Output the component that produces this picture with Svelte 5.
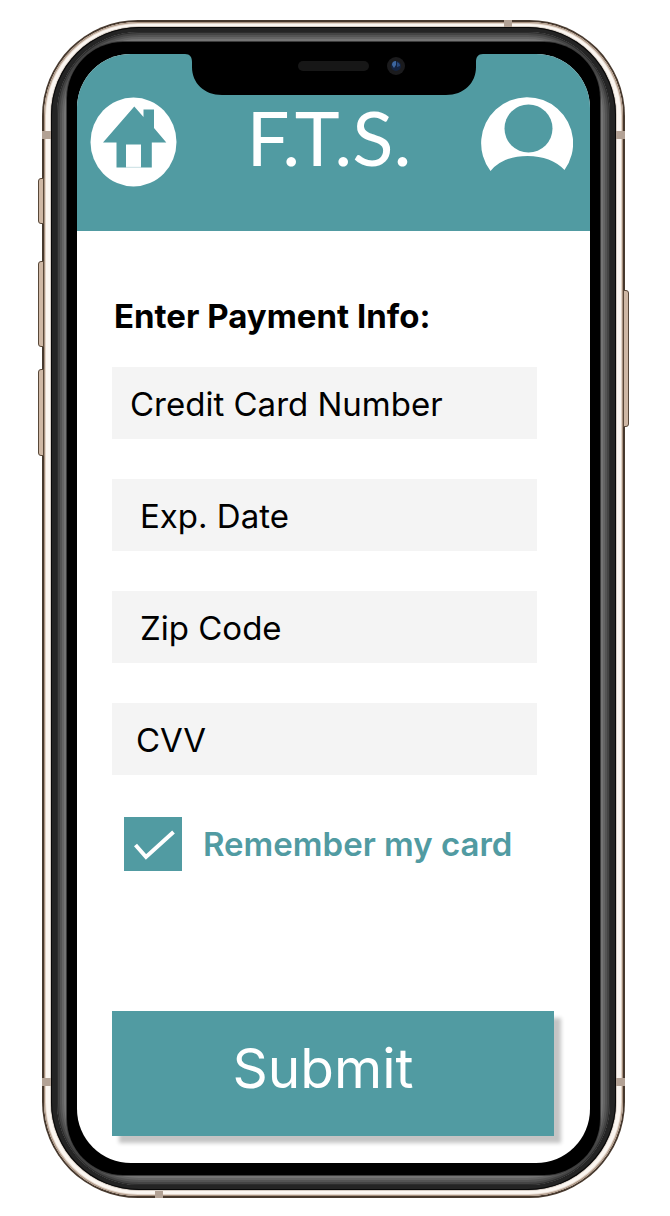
<script>
  const fields = [
    { id: 'card-number', text: 'Credit Card Number', indent: 'narrow', mode: 'numeric' },
    { id: 'exp-date', text: 'Exp. Date', indent: 'wide', mode: 'text' },
    { id: 'zip-code', text: 'Zip Code', indent: 'wide', mode: 'numeric' },
    { id: 'cvv', text: 'CVV', indent: 'middle', mode: 'numeric' }
  ];
  let values = $state(['', '', '', '']);
  let remember = $state(true);
</script>

<div class="page">
  <div class="phone">
    <span class="key key-mute"></span>
    <span class="key key-up"></span>
    <span class="key key-down"></span>
    <span class="key key-power"></span>
    <div class="steel">
      <span class="band side left upper"></span>
      <span class="band side left lower"></span>
      <span class="band side right upper"></span>
      <span class="band side right lower"></span>
      <span class="band flat top"></span>
      <span class="band flat bottom"></span>
      <div class="seal">
        <div class="rim">
          <div class="bezel">
            <main class="screen">
              <svg class="notch" viewBox="0 0 298 42" aria-hidden="true">
                <path d="M0 0H298C293 0 291 3 291 8V13C291 29 279 41 261 41H37C19 41 7 29 7 13V8C7 3 5 0 0 0Z" fill="#000" />
                <rect x="113" y="7" width="71" height="10" rx="5" fill="#171717" />
                <circle cx="211" cy="12" r="9" fill="#1b1b1d" />
                <circle cx="211" cy="12" r="5" fill="#14233f" />
                <path d="M207 11a4 4 0 0 1 4-4v4l-2 3z" fill="#3d669f" />
                <path d="M212 8q3 1 3 4l-3 1z" fill="#29497d" />
              </svg>

              <header>
                <a class="home" href="#home" aria-label="Home">
                  <svg width="87" height="90" viewBox="0 0 87 90">
                    <ellipse cx="43.5" cy="45" rx="43" ry="44.5" fill="#fff" />
                    <path d="M44.3 9.5L53.5 20V12.5H64V31L76.3 45.5H61.8V70.5H51V47.5H36V70.5H26.5V45.5H13Z" fill="#519ba2" />
                    <path d="M36 70.3H51" stroke="#c9dfe3" />
                  </svg>
                </a>
                <span class="brand">F.T.S.</span>
                <a class="profile" href="#profile" aria-label="Profile">
                  <svg width="92" height="76" viewBox="0 0 92 76">
                    <path d="M9.500 74A46 46 0 1 1 83.500 73Q70 59 46.500 59Q22 59 9.500 74Z" fill="#fff" />
                    <circle cx="47.500" cy="31.500" r="24" fill="#519ba2" />
                  </svg>
                </a>
              </header>

              <form onsubmit={(event) => event.preventDefault()}>
                <h1>Enter Payment Info:</h1>
                <div class="fields">
                  {#each fields as field, i}
                    <input
                      id={field.id}
                      class={field.indent}
                      type="text"
                      inputmode={field.mode}
                      aria-label={field.text}
                      placeholder={field.text}
                      bind:value={values[i]}
                    />
                  {/each}
                </div>
                <label class="remember" for="remember">
                  <span class="tick">
                    <input id="remember" type="checkbox" bind:checked={remember} />
                    {#if remember}
                      <svg viewBox="0 0 57 54" aria-hidden="true">
                        <path d="M11 28L21.500 40L49 15" fill="none" stroke="#fff" stroke-width="4" />
                      </svg>
                    {/if}
                  </span>
                  <span>Remember my card</span>
                </label>
                <button type="submit">Submit</button>
              </form>
            </main>
          </div>
        </div>
      </div>
    </div>
  </div>
</div>

<style>
  :global(body) {
    margin: 0;
    background: #fff;
  }

  .page {
    padding: 20px 45px 18px 42px;
    font-family: Inter, "Liberation Sans", sans-serif;
    color: #000;
  }

  .page * {
    box-sizing: border-box;
  }

  .phone {
    position: relative;
    max-width: 720px;
    margin: 0 auto;
    padding: 2px;
    border-radius: 96px;
    background: #47392e;
  }

  .steel {
    position: relative;
    padding: 5px 7px 6px;
    border-radius: 94px;
    background: #fbf6f1;
    box-shadow: inset 0 0 0 1px #a8917f, inset 0 0 0 2px #e2d5ca;
  }

  .seal {
    padding: 5px 6px;
    border-radius: 88px;
    background: #242424;
    box-shadow: inset 0 0 0 1px #080808, 0 0 0 1px #d6cdc5;
  }

  .rim {
    padding: 10px;
    border-radius: 82px;
    background: #747474;
    box-shadow:
      inset 0 0 0 1px #2c2c2c,
      inset 0 0 0 3px #444,
      inset 0 0 0 5px #545454,
      inset 0 0 0 7px #646464;
  }

  .bezel {
    padding: 12px 10px;
    border-radius: 56px;
    background: #000;
    box-shadow: 0 0 0 1px #3c3c3c;
  }

  .screen {
    position: relative;
    display: block;
    border-radius: 54px;
    overflow: hidden;
    background: #fff;
  }

  .notch {
    position: absolute;
    top: 0;
    left: 50%;
    width: 298px;
    height: 42px;
    transform: translateX(-50%);
  }

  .key {
    position: absolute;
    left: -4px;
    width: 6px;
    border: 1px solid #594839;
    border-radius: 3px 0 0 3px;
    background: #cfb8a5;
  }

  .key-mute {
    top: 158px;
    height: 46px;
  }

  .key-up {
    top: 241px;
    height: 86px;
  }

  .key-down {
    top: 349px;
    height: 87px;
  }

  .key-power {
    top: 270px;
    right: -4px;
    left: auto;
    height: 137px;
    border-radius: 0 3px 3px 0;
  }

  .band {
    position: absolute;
    background: #b3a295;
  }

  .side {
    width: 9px;
    height: 8px;
  }

  .flat {
    width: 8px;
    height: 7px;
  }

  .left {
    left: -2px;
  }

  .right {
    right: -2px;
  }

  .upper {
    top: 109px;
  }

  .lower {
    bottom: 110px;
  }

  .top {
    top: -2px;
    right: 111px;
  }

  .bottom {
    bottom: -2px;
    left: 111px;
  }

  header {
    display: flex;
    align-items: flex-start;
    justify-content: space-between;
    height: 177px;
    padding: 43px 17px 0 13px;
    background: #519ba2;
  }

  header svg {
    display: block;
  }

  .brand {
    font-family: Lato, "Liberation Sans", sans-serif;
    font-size: 76px;
    font-weight: 400;
    line-height: 80px;
    color: #fff;
  }

  form {
    display: flex;
    flex-direction: column;
    padding: 65px 36px 27px 35px;
  }

  h1 {
    margin: 0 0 31px 2px;
    font-size: 33px;
    font-weight: 700;
    line-height: 40px;
  }

  .fields {
    display: flex;
    flex-direction: column;
    gap: 40px;
    padding-right: 17px;
  }

  .fields input {
    width: 100%;
    height: 72px;
    padding: 2px 18px 0;
    border: 0;
    border-radius: 0;
    background: #f4f4f4;
    font-family: inherit;
    font-size: 33px;
    color: #000;
  }

  .fields input.middle {
    padding-left: 24px;
  }

  .fields input.wide {
    padding-left: 28px;
  }

  .fields input::placeholder {
    color: #000;
    opacity: 1;
  }

  .remember {
    display: flex;
    align-items: center;
    gap: 21px;
    margin: 42px 0 140px 12px;
    font-size: 33px;
    font-weight: 600;
    line-height: 40px;
    color: #519ba2;
  }

  .tick {
    display: grid;
    flex: none;
    width: 58px;
    height: 54px;
  }

  .tick input,
  .tick svg {
    grid-area: 1 / 1;
    width: 100%;
    height: 100%;
    margin: 0;
  }

  .tick input {
    appearance: none;
    background: #519ba2;
  }

  .tick svg {
    pointer-events: none;
  }

  button {
    height: 125px;
    padding: 0 20px 12px 0;
    border: 0;
    background: #519ba2;
    box-shadow: 7px 7px 4px #c4c4c4;
    font-family: inherit;
    font-size: 55px;
    font-weight: 400;
    color: #fff;
  }
</style>
